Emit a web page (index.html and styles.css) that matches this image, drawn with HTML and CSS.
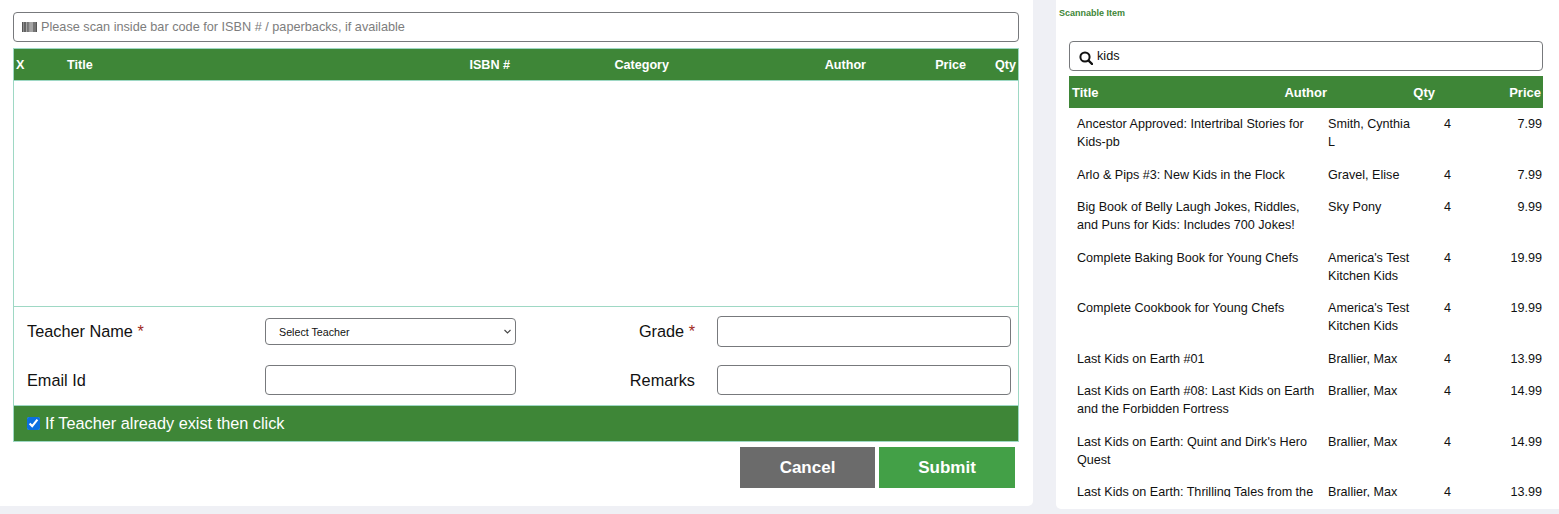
FILE: index.html
```html
<!DOCTYPE html>
<html lang="en">
<head>
    <meta charset="UTF-8">
    <meta name="viewport" content="width=device-width, initial-scale=1.0">
    <title>Book Issue</title>
    <link rel="stylesheet" href="styles.css">
</head>
<body>
<div class="page">
    <div class="order-card">
        <div class="search-box scan-box">
            <svg class="barcode-icon" width="15" height="10" viewBox="0 0 15 10">
                <rect width="15" height="10" fill="#a5a5a5"/>
                <path d="M0 0h1.3v10H0zM2.2 0h1.6v10H2.2zM5 0h.6v10H5zM6.5 0h.6v10h-.6zM11.4 0h1.2v10h-1.2zM13.4 0H15v10h-1.6z" fill="#555"/>
            </svg>
            <input type="text" placeholder="Please scan inside bar code for ISBN # / paperbacks, if available">
        </div>

        <div class="order-head">
            <span>X</span>
            <span>Title</span>
            <span class="right">ISBN #</span>
            <span class="right">Category</span>
            <span class="right">Author</span>
            <span class="right">Price</span>
            <span class="right">Qty</span>
        </div>
        <div class="order-body"></div>

        <form class="teacher-form">
            <label>Teacher Name <span class="star">*</span></label>
            <select class="teacher-select">
                <option>Select Teacher</option>
            </select>
            <label class="right">Grade <span class="star">*</span></label>
            <input type="text" class="grade-input">

            <label>Email Id</label>
            <input type="text">
            <label class="right">Remarks</label>
            <input type="text">
        </form>

        <label class="exist-bar">
            <input type="checkbox" checked>
            If Teacher already exist then click
        </label>

        <div class="button-row">
            <button type="button" class="btn cancel">Cancel</button>
            <button type="button" class="btn submit">Submit</button>
        </div>
    </div>

    <div class="item-card">
        <h4>Scannable Item</h4>
        <div class="item-panel">
            <div class="search-box">
                <svg class="search-icon" width="14" height="14" viewBox="0 0 14 14">
                    <circle cx="6" cy="6" r="4.6" fill="none" stroke="#111" stroke-width="2"/>
                    <path d="M9.5 9.5l3.5 3.5" stroke="#111" stroke-width="2.4" stroke-linecap="round"/>
                </svg>
                <input type="text" value="kids">
            </div>
            <div class="item-head">
                <span>Title</span>
                <span class="right">Author</span>
                <span class="right">Qty</span>
                <span class="right">Price</span>
            </div>
            <div class="item-list">
                <div class="item-row"><span>Ancestor Approved: Intertribal Stories for Kids-pb</span><span>Smith, Cynthia L</span><span>4</span><span class="right">7.99</span></div>
                <div class="item-row"><span>Arlo &amp; Pips #3: New Kids in the Flock</span><span>Gravel, Elise</span><span>4</span><span class="right">7.99</span></div>
                <div class="item-row"><span>Big Book of Belly Laugh Jokes, Riddles, and Puns for Kids: Includes 700 Jokes!</span><span>Sky Pony</span><span>4</span><span class="right">9.99</span></div>
                <div class="item-row"><span>Complete Baking Book for Young Chefs</span><span>America's Test Kitchen Kids</span><span>4</span><span class="right">19.99</span></div>
                <div class="item-row"><span>Complete Cookbook for Young Chefs</span><span>America's Test Kitchen Kids</span><span>4</span><span class="right">19.99</span></div>
                <div class="item-row"><span>Last Kids on Earth #01</span><span>Brallier, Max</span><span>4</span><span class="right">13.99</span></div>
                <div class="item-row"><span>Last Kids on Earth #08: Last Kids on Earth and the Forbidden Fortress</span><span>Brallier, Max</span><span>4</span><span class="right">14.99</span></div>
                <div class="item-row"><span>Last Kids on Earth: Quint and Dirk's Hero Quest</span><span>Brallier, Max</span><span>4</span><span class="right">14.99</span></div>
                <div class="item-row"><span>Last Kids on Earth: Thrilling Tales from the Tree House</span><span>Brallier, Max</span><span>4</span><span class="right">13.99</span></div>
            </div>
        </div>
    </div>
</div>
</body>
</html>
```

FILE: styles.css
```css
body {
    font-family: "Liberation Sans", Arial, sans-serif;
    background-color: #eff0f5;
    margin: 0;
    padding: 0;
    color: #111;
    overflow: hidden;
}

.page {
    display: flex;
    align-items: flex-start;
    height: 514px;
}

.right {
    text-align: right;
}

/* left card */
.order-card {
    width: 1033px;
    height: 506px;
    box-sizing: border-box;
    padding: 12px 0 0 13px;
    margin-right: 23px;
    background-color: #fff;
    border-radius: 0 0 5px 0;
    flex-shrink: 0;
}

.search-box {
    display: flex;
    align-items: center;
    height: 30px;
    box-sizing: border-box;
    border: 1px solid #77797c;
    border-radius: 4px;
    padding-left: 8px;
    background-color: #fff;
}

.search-box input {
    flex: 1;
    border: none;
    outline: none;
    padding: 0;
    font-family: inherit;
    font-size: 12.7px;
    color: #111;
    background: none;
}

.scan-box {
    width: 1006px;
    margin-bottom: 6px;
}

.scan-box input::placeholder {
    color: #7d7d7d;
}

.barcode-icon {
    margin-right: 4px;
    flex-shrink: 0;
}

.order-head {
    display: grid;
    grid-template-columns: 51px 200px 243px 159px 197px 100px 50px;
    align-items: center;
    width: 1006px;
    height: 33px;
    box-sizing: border-box;
    padding: 0 2px;
    border: 1px solid #9ed8c4;
    background-color: #3e8637;
    color: #fff;
    font-size: 12.6px;
    font-weight: bold;
}

.order-body {
    width: 1006px;
    height: 225px;
    box-sizing: border-box;
    border-left: 1px solid #9ed8c4;
    border-right: 1px solid #9ed8c4;
}

.teacher-form {
    display: grid;
    grid-template-columns: 238px 251px 201px 294px;
    row-gap: 18px;
    align-items: center;
    align-content: start;
    width: 1006px;
    height: 99px;
    box-sizing: border-box;
    padding: 9px 0 0 13px;
    border: 1px solid #9ed8c4;
    border-bottom: none;
    font-size: 16.3px;
}

.teacher-form label.right {
    padding-right: 22px;
}

.teacher-form input {
    width: 100%;
    height: 30px;
    box-sizing: border-box;
    border: 1px solid #77797c;
    border-radius: 4px;
    padding: 0 8px;
}

.teacher-form .grade-input {
    height: 31px;
}

.teacher-select {
    appearance: none;
    width: 251px;
    height: 27px;
    box-sizing: border-box;
    border: 1px solid #77797c;
    border-radius: 4px;
    padding-left: 13px;
    background: #fff url("data:image/svg+xml,%3Csvg xmlns='http://www.w3.org/2000/svg' width='7' height='5'%3E%3Cpath d='M.5 1l3 3 3-3' fill='none' stroke='%23444' stroke-width='1.1'/%3E%3C/svg%3E") no-repeat right 4px center;
    font-family: inherit;
    font-size: 10.7px;
    color: #111;
}

.star {
    color: #a12a22;
}

.exist-bar {
    display: flex;
    align-items: center;
    width: 1006px;
    height: 37px;
    box-sizing: border-box;
    padding-left: 13px;
    border: 1px solid #9ed8c4;
    background-color: #3e8637;
    color: #fff;
    font-size: 16.3px;
}

.exist-bar input {
    width: 13px;
    height: 13px;
    margin: 0 5px 0 0;
    accent-color: #0b6fe0;
}

.button-row {
    display: flex;
    justify-content: flex-end;
    gap: 4px;
    width: 1002px;
    margin-top: 5px;
}

.btn {
    height: 41px;
    border: none;
    color: #fff;
    font-family: inherit;
    font-size: 17px;
    font-weight: bold;
    cursor: pointer;
}

.cancel {
    width: 135px;
    background-color: #6b6b6b;
}

.submit {
    width: 136px;
    background-color: #43a047;
}

/* right card */
.item-card {
    width: 503px;
    height: 509px;
    box-sizing: border-box;
    background-color: #fff;
    border-radius: 0 0 0 5px;
    flex-shrink: 0;
}

.item-card h4 {
    margin: 0;
    padding: 8px 0 0 3px;
    height: 41px;
    box-sizing: border-box;
    color: #3e8637;
    font-size: 9px;
    line-height: 10px;
    font-weight: bold;
}

.item-panel {
    width: 474px;
    margin-left: 13px;
}

.item-panel .search-box {
    height: 30px;
    padding-left: 9px;
    margin-bottom: 5px;
}

.search-icon {
    margin: 3px 4px 0 0;
    flex-shrink: 0;
}

.item-head {
    display: grid;
    grid-template-columns: 167px 88px 108px 106px;
    align-items: center;
    height: 32px;
    box-sizing: border-box;
    padding: 0 2px 0 3px;
    background-color: #3e8637;
    color: #fff;
    font-size: 13px;
    font-weight: bold;
}

.item-list {
    height: 389px;
    overflow: hidden;
}

.item-row {
    display: grid;
    grid-template-columns: 251px 116px 36px 63px;
    padding: 7.25px 0 7.25px 8px;
    font-size: 12.6px;
    line-height: 18px;
}

.item-row span:first-child {
    padding-right: 8px;
}

.item-row span:nth-child(2) {
    padding-right: 26px;
}

.item-row span:last-child {
    padding-right: 1px;
}
```
